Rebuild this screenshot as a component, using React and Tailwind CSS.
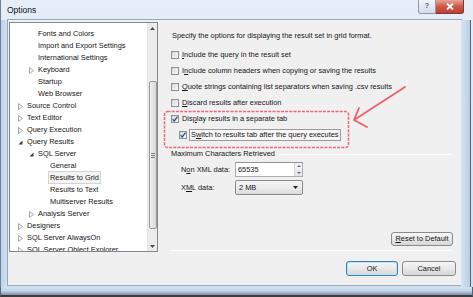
import React from 'react';

const treeItems = [
  { label: 'Fonts and Colors', level: 2 },
  { label: 'Import and Export Settings', level: 2 },
  { label: 'International Settings', level: 2 },
  { label: 'Keyboard', level: 2, toggle: 'closed' },
  { label: 'Startup', level: 2 },
  { label: 'Web Browser', level: 2 },
  { label: 'Source Control', level: 1, toggle: 'closed' },
  { label: 'Text Editor', level: 1, toggle: 'closed' },
  { label: 'Query Execution', level: 1, toggle: 'closed' },
  { label: 'Query Results', level: 1, toggle: 'open' },
  { label: 'SQL Server', level: 2, toggle: 'open' },
  { label: 'General', level: 3 },
  { label: 'Results to Grid', level: 3, selected: true },
  { label: 'Results to Text', level: 3 },
  { label: 'Multiserver Results', level: 3 },
  { label: 'Analysis Server', level: 2, toggle: 'closed' },
  { label: 'Designers', level: 1, toggle: 'closed' },
  { label: 'SQL Server AlwaysOn', level: 1, toggle: 'closed' },
  { label: 'SQL Server Object Explorer', level: 1, toggle: 'closed' },
];

const indent = { 1: 'pl-[16px]', 2: 'pl-[27px]', 3: 'pl-[39px]' };

const Toggle = ({ kind }) =>
  kind === 'open' ? (
    <svg width="5" height="5" viewBox="0 0 5 5" className="absolute -left-[8px] top-[4px]">
      <path d="M4.5 0.5 L4.5 4.5 L0.5 4.5 Z" fill="#3c3c3c" />
    </svg>
  ) : (
    <svg width="5" height="7" viewBox="0 0 5 7" className="absolute -left-[8px] top-[3px]">
      <path d="M0.5 0.5 L4.5 3.5 L0.5 6.5 Z" fill="none" stroke="#a8a8a8" strokeWidth="1" />
    </svg>
  );

const TreeRow = ({ item }) => (
  <div className={`h-[12px] flex items-center ${indent[item.level]}`}>
    <span
      className={`relative px-[1px] leading-[11px] whitespace-nowrap ${
        item.selected ? 'bg-[#f3f3f3] border border-[#d3d3d3] -ml-[1px]' : 'border border-transparent -ml-[1px]'
      }`}
    >
      {item.toggle && <Toggle kind={item.toggle} />}
      {item.label}
    </span>
  </div>
);

const Check = ({ checked }) => (
  <span className="w-[8px] h-[8px] shrink-0 border border-[#8e8f8f] bg-gradient-to-br from-[#d8d8d8] to-[#fbfbfb] flex items-center justify-center">
    {checked && (
      <svg width="6" height="6" viewBox="0 0 6 6">
        <path d="M0.6 3.2 L2.3 5 L5.5 0.6" fill="none" stroke="#2b4f96" strokeWidth="1.3" />
      </svg>
    )}
  </span>
);

const CheckRow = ({ checked, indented, focus, children }) => (
  <div className={`h-[16px] flex items-center gap-[2px] ${indented ? 'pl-[9px]' : 'pl-[1px]'}`}>
    <Check checked={checked} />
    <span className={`leading-[10px] whitespace-nowrap ${focus ? 'border border-[#9a9a9a] px-[1px] bg-[#f6f6f6]' : 'px-[1px]'}`}>
      {children}
    </span>
  </div>
);

const WinButton = ({ children, focused, className = '' }) => (
  <div
    className={`flex items-center justify-center rounded-[3px] border ${
      focused ? 'border-[#3c7fb1] shadow-[inset_0_0_0_1px_#bfe4f8]' : 'border-[#8a8a8a]'
    } bg-gradient-to-b from-[#f6f6f6] via-[#e9e9e9] to-[#d6d6d6] ${className}`}
  >
    {children}
  </div>
);

export default function App() {
  return (
    <div className="relative w-[473px] h-[297px] overflow-hidden font-['Liberation_Sans',Arial,sans-serif] text-[7.4px] text-[#151515] bg-gradient-to-b from-[#e6eef8] to-[#cddff0]">
      {/* title bar */}
      <div className="h-[20px] flex items-start justify-between border-l border-[#6f8196]">
        <div className="pl-[6px] pt-[5px] text-[8.5px] leading-[10px] text-[#111]">Options</div>
        <div className="flex mr-[9px]">
          <div className="w-[18px] h-[14px] rounded-bl-[3px] border border-t-0 border-[#8c9bab] bg-gradient-to-b from-[#f1f5fa] to-[#d3dde9] flex items-center justify-center text-[7px] font-bold text-[#55606c]">
            ?
          </div>
          <div className="w-[28px] h-[14px] rounded-br-[3px] border border-t-0 border-l-0 border-[#7b3a33] bg-gradient-to-b from-[#e5a495] via-[#cf5848] to-[#c13c2b] flex items-center justify-center">
            <svg width="8" height="7" viewBox="0 0 8 7">
              <path d="M1 0.5 L7 6.5 M7 0.5 L1 6.5" stroke="#fff" strokeWidth="1.8" />
            </svg>
          </div>
        </div>
      </div>

      <div className="flex h-[267px]">
        <div className="w-[8px] border-l border-[#6f8196] bg-gradient-to-r from-[#bcd1e8] to-[#d7e5f3]" />

        {/* client area */}
        <div className="w-[455px] h-full bg-[#f0f0f0] border border-[#97a9bd] -m-[1px] flex items-start">
          {/* tree */}
          <div className="ml-[1px] mt-[2px] w-[149px] h-[230px] border border-[#828790] bg-white flex overflow-hidden">
            <div className="flex-1 pt-[4px] overflow-hidden">
              {treeItems.map((item) => (
                <TreeRow key={item.label} item={item} />
              ))}
            </div>
            <div className="w-[10px] bg-[#ececec] border-l border-[#e4e4e4] flex flex-col items-center">
              <div className="h-[10px] flex items-center justify-center">
                <svg width="5" height="3" viewBox="0 0 5 3">
                  <path d="M0 3 L2.5 0 L5 3 Z" fill="#4d4d4d" />
                </svg>
              </div>
              <div className="mt-[48px] w-[8px] h-[148px] rounded-[2px] border border-[#9a9a9a] bg-gradient-to-r from-[#f1f1f1] to-[#d8d8d8] flex flex-col items-center justify-center gap-[1px]">
                <span className="w-[4px] h-px bg-[#808080]" />
                <span className="w-[4px] h-px bg-[#808080]" />
                <span className="w-[4px] h-px bg-[#808080]" />
              </div>
              <div className="flex-1" />
              <div className="h-[10px] flex items-center justify-center">
                <svg width="5" height="3" viewBox="0 0 5 3">
                  <path d="M0 0 L2.5 3 L5 0 Z" fill="#4d4d4d" />
                </svg>
              </div>
            </div>
          </div>

          {/* right panel */}
          <div className="ml-[12px] flex-1 h-full flex flex-col pt-[8px]">
            <div className="h-[16px] flex items-center pl-[2px] whitespace-nowrap">
              Specify the options for displaying the result set in grid format.
            </div>
            <div className="mt-[3px] flex flex-col">
              <CheckRow>
                <span className="underline">I</span>nclude the query in the result set
              </CheckRow>
              <CheckRow>
                I<span className="underline">n</span>clude column headers when copying or saving the results
              </CheckRow>
              <CheckRow>
                <span className="underline">Q</span>uote strings containing list separators when saving .csv results
              </CheckRow>
              <CheckRow>
                <span className="underline">D</span>iscard results after execution
              </CheckRow>
              <CheckRow checked>
                Dis<span className="underline">p</span>lay results in a separate tab
              </CheckRow>
              <CheckRow checked indented focus>
                S<span className="underline">w</span>itch to results tab after the query executes
              </CheckRow>
            </div>

            {/* group */}
            <div className="mt-[4px] h-[14px] flex items-center gap-[4px] pl-[1px] mr-[8px]">
              <span className="whitespace-nowrap">Maximum Characters Retrieved</span>
              <span className="flex-1 h-px bg-[#d5d5d5] border-b border-white" />
            </div>
            <div className="mt-[1px] h-[15px] flex items-center pl-[11px]">
              <span className="w-[54px]">
                N<span className="underline">o</span>n XML data:
              </span>
              <div className="w-[68px] h-[15px] border border-[#abadb3] border-t-[#8f929a] bg-white flex items-center">
                <span className="flex-1 pl-[2px]">65535</span>
                <div className="w-[8px] h-full flex flex-col border-l border-[#d7d7d7]">
                  <div className="flex-1 flex items-center justify-center bg-[#f1f1f1]">
                    <svg width="4" height="2" viewBox="0 0 4 2"><path d="M0 2 L2 0 L4 2Z" fill="#5b6a86" /></svg>
                  </div>
                  <div className="flex-1 flex items-center justify-center bg-[#e8e8e8]">
                    <svg width="4" height="2" viewBox="0 0 4 2"><path d="M0 0 L2 2 L4 0Z" fill="#5b6a86" /></svg>
                  </div>
                </div>
              </div>
            </div>
            <div className="mt-[3px] h-[15px] flex items-center pl-[11px]">
              <span className="w-[54px]">
                X<span className="underline">M</span>L data:
              </span>
              <div className="w-[68px] h-[15px] rounded-[2px] border border-[#8a8a8a] bg-gradient-to-b from-[#f4f4f4] via-[#ececec] to-[#dcdcdc] flex items-center">
                <span className="flex-1 pl-[3px]">2 MB</span>
                <svg width="5" height="3" viewBox="0 0 5 3" className="mr-[4px]">
                  <path d="M0 0 L2.5 3 L5 0 Z" fill="#222" />
                </svg>
              </div>
            </div>

            <WinButton className="mt-[37px] self-end mr-[8px] w-[62px] h-[14px]">
              <span>
                <span className="underline">R</span>eset to Default
              </span>
            </WinButton>
            <div className="mt-[4px] mr-[8px] h-px bg-[#d5d5d5] border-b border-white" />
            <div className="mt-[10px] flex justify-end gap-[4px] mr-[5px]">
              <WinButton focused className="w-[52px] h-[15px]">OK</WinButton>
              <WinButton className="w-[54px] h-[15px]">Cancel</WinButton>
            </div>
          </div>
        </div>

        <div className="w-[10px] bg-gradient-to-r from-[#d7e5f3] to-[#b9cde3] border-r border-[#52657b]" />
      </div>

      {/* bottom frame */}
      <div className="h-[10px] bg-gradient-to-b from-[#d3e2f1] via-[#bfd3e8] to-[#7d8ea2] border-l border-r border-[#52657b] border-b-2 border-b-[#3c3c3c]" />

      {/* red annotation */}
      <svg width="473" height="297" className="absolute left-0 top-0 pointer-events-none">
        <rect x="164.5" y="111.5" width="184" height="36" rx="3" fill="none" stroke="#ee4f5f" strokeOpacity="0.85" strokeWidth="1.5" strokeDasharray="3 1.2" />
        <path d="M405 87 L354 120 M354 120 L359 108 M354 120 L367 127" fill="none" stroke="#ee4f5f" strokeOpacity="0.9" strokeWidth="1.8" strokeLinecap="round" />
      </svg>
    </div>
  );
}
